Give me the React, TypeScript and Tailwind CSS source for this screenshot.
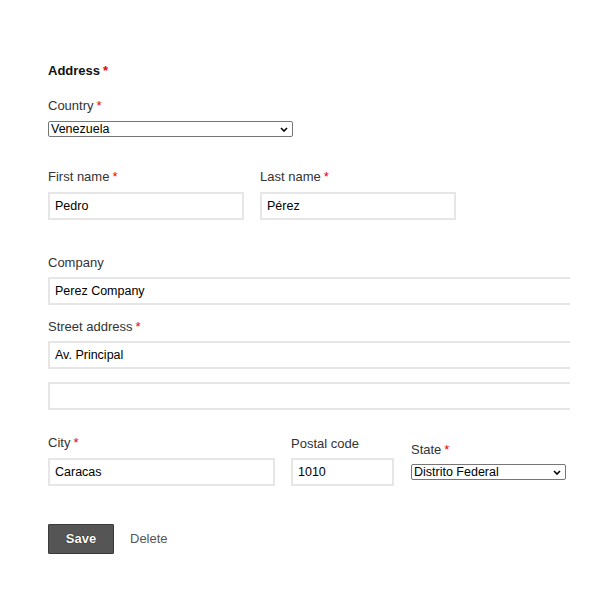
import { type ReactNode } from "react";

const font = { fontFamily: '"Liberation Sans", Arial, sans-serif' };

function Req() {
  return <span className="text-[#e00] ml-[3px]">*</span>;
}

function Label({ children, required }: { children: ReactNode; required?: boolean }) {
  return (
    <label className="block text-[13px] leading-[16px] text-[#333]">
      {children}
      {required && <Req />}
    </label>
  );
}

function TextInput({ value, className }: { value: string; className: string }) {
  return (
    <input
      defaultValue={value}
      className={`block h-[28px] border-2 border-[#e6e6e6] bg-white px-[5px] text-[12.5px] text-black outline-none ${className}`}
    />
  );
}

// full-width fields run past the form's right edge and get cut off there
function WideInput({ value, className }: { value: string; className: string }) {
  return (
    <div className={`w-[522px] overflow-hidden ${className}`}>
      <TextInput value={value} className="w-[560px]" />
    </div>
  );
}

function Select({ value, className }: { value: string; className: string }) {
  return (
    <div className={`relative h-[16px] ${className}`}>
      <select
        defaultValue={value}
        className="block h-[16px] w-full appearance-none rounded-[2px] border border-[#767676] bg-white py-0 pl-[2px] text-[12.5px] leading-[14px] text-black outline-none"
      >
        <option>{value}</option>
      </select>
      <svg
        className="pointer-events-none absolute right-[5px] top-[6px]"
        width="8"
        height="5"
        viewBox="0 0 8 5"
      >
        <path d="M1 1l3 3 3-3" fill="none" stroke="#000" strokeWidth="1.6" />
      </svg>
    </div>
  );
}

export default function App() {
  return (
    <div className="min-h-[600px] w-[600px] bg-white pl-[48px] pt-[63px]" style={font}>
      <h2 className="text-[13px] font-bold leading-[16px] text-[#111]">
        Address
        <Req />
      </h2>

      <div className="mt-[19px]">
        <Label required>Country</Label>
        <Select value="Venezuela" className="mt-[7px] w-[245px]" />
      </div>

      <div className="mt-[32px] flex gap-[16px]">
        <div>
          <Label required>First name</Label>
          <TextInput value="Pedro" className="mt-[7px] w-[196px]" />
        </div>
        <div>
          <Label required>Last name</Label>
          <TextInput value="Pérez" className="mt-[7px] w-[196px]" />
        </div>
      </div>

      <div className="mt-[35px]">
        <Label>Company</Label>
        <WideInput value="Perez Company" className="mt-[6px]" />
      </div>

      <div className="mt-[14px]">
        <Label required>Street address</Label>
        <WideInput value="Av. Principal" className="mt-[6px]" />
        <WideInput value="" className="mt-[13px]" />
      </div>

      <div className="mt-[25px] flex items-start">
        <div>
          <Label required>City</Label>
          <TextInput value="Caracas" className="mt-[7px] w-[227px]" />
        </div>
        <div className="ml-[16px] pt-[1px]">
          <Label>Postal code</Label>
          <TextInput value="1010" className="mt-[6px] w-[103px]" />
        </div>
        <div className="ml-[17px] pt-[7px]">
          <Label required>State</Label>
          <Select value="Distrito Federal" className="mt-[6px] w-[155px]" />
        </div>
      </div>

      <div className="mt-[38px] flex items-center">
        <button className="h-[30px] w-[66px] rounded-[1px] border border-[#3a3a3a] bg-[#555] text-[13px] font-bold text-white [text-shadow:0_0_1px_#000]">
          Save
        </button>
        <button className="ml-[16px] text-[13px] text-[#555]">Delete</button>
      </div>
    </div>
  );
}
